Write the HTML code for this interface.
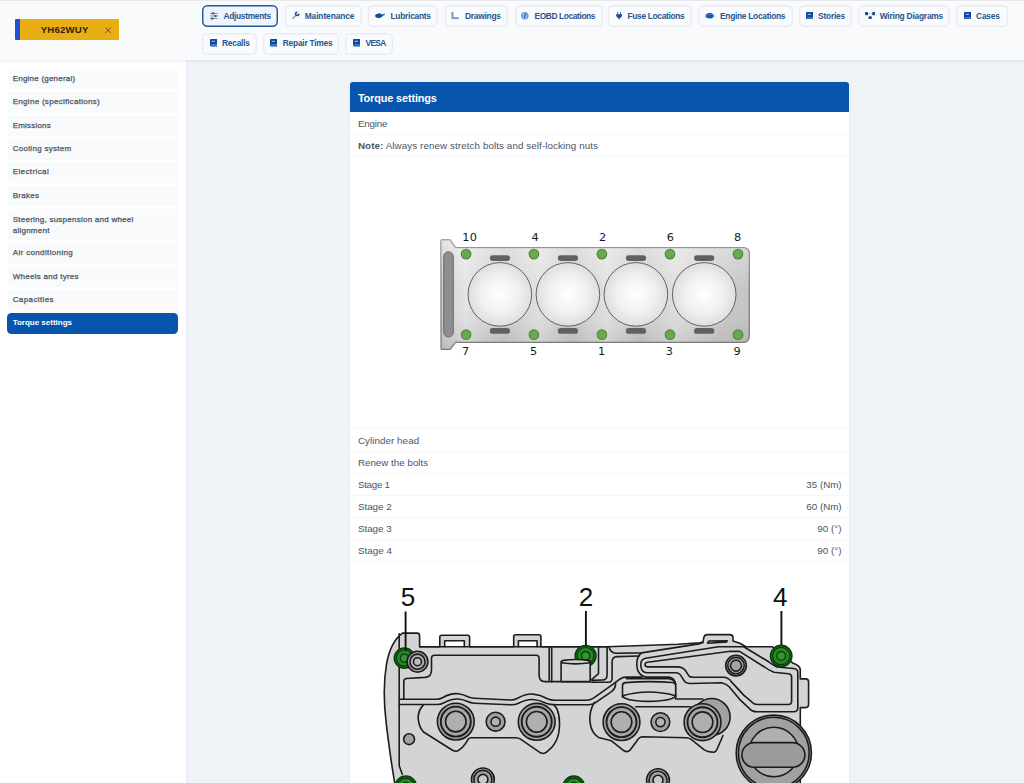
<!DOCTYPE html>
<html lang="en">
<head>
<meta charset="utf-8">
<title>Torque settings</title>
<style>
*{box-sizing:border-box;margin:0;padding:0}
html,body{width:1024px;height:783px;overflow:hidden}
body{background:#eff3f8;font-family:"Liberation Sans",sans-serif;color:#4b5563;position:relative;font-size:8.4px}
#top{position:absolute;left:0;top:0;width:1024px;height:60.400px;background:#f9fafc;box-shadow:inset 0 1px 0 #e6e8ec,0 .5px 2.500px rgba(40,50,80,.10);z-index:3}
#plate{position:absolute;left:14.9px;top:19.3px;width:104.1px;height:20.6px;background:linear-gradient(90deg,#2150d9 5.1px,#e9ae14 5.1px);border-radius:1px}
#plate b{position:absolute;left:25.8px;top:0;line-height:21.6px;font-size:9.6px;color:#2a2414;white-space:nowrap}
#plate svg{position:absolute;left:90.5px;top:7.5px}
.btn{position:absolute;height:22.1px;border-radius:5.5px;background:#f9fbfd;color:#27568f;font-weight:bold;font-size:8.4px;line-height:23px;white-space:nowrap;box-shadow:inset 0 0 0 1.4px #e8ecf2}
.btn span{position:absolute;top:0}
.btn svg{position:absolute;top:7.2px}
.btn svg.ic-book{top:7.1px}.btn.r2 svg.ic-book{top:6.9px}.btn svg.ic-oil{top:8.3px}.btn svg.ic-engine{top:8.400px}.btn svg.ic-plug{top:6.800px}.btn svg.ic-sliders{top:7px}.btn svg.ic-wrench{top:6.200px}
.btn.act{background:#f0f5fd;box-shadow:inset 0 0 0 1.5px #225b9b}
#side{position:absolute;left:0;top:60px;width:185.700px;height:724px;background:#fff;box-shadow:.5px 0 3px rgba(40,50,80,.07);z-index:2}
.it{position:absolute;left:8px;width:169.5px;height:20.5px;background:#f8fafc;border-radius:2px;padding-left:4.7px;line-height:20.5px;color:#4b5563;font-size:8px;white-space:nowrap;-webkit-text-stroke:.25px #4b5563}
.it.two{line-height:11px;padding-top:4.8px}
.it.sel{left:7px;width:171px;background:#0855ad;color:#fff;border-radius:4.5px;padding-left:5.7px;font-weight:bold;-webkit-text-stroke:0}
#card{position:absolute;left:349.5px;top:82px;width:499.5px;height:720px;background:#fff;border-radius:3px 3px 0 0;box-shadow:0 0 2px rgba(0,0,0,.08)}
#card h1{height:30.4px;background:#0855ad;color:#fff;font-size:10.9px;line-height:33.4px;padding-left:8.4px;border-radius:3px 3px 0 0;font-weight:bold;white-space:nowrap}
.row{position:absolute;left:0;width:500px;height:22.1px;border-bottom:1px solid #f4f6f9;line-height:22.4px;padding:0 8.4px;font-size:9.8px;color:#4b5563;white-space:nowrap}
.row em{position:absolute;right:7.9px;top:0;font-style:normal}
.btn.r2{line-height:21.4px}
.fig{position:absolute;left:0;width:500px;overflow:hidden}
.fig svg{position:absolute;left:0;top:0}
</style>
</head>
<body>
<div id="top">
<div id="plate"><b id="pl" style="letter-spacing:0.218px;">YH62WUY</b><svg viewBox="0 0 8 8" width="6.4" height="6.4"><path d="M.6.6 7.400 7.400M7.400.6.6 7.400" stroke="#5b4a17" stroke-width="1.100" fill="none"/></svg></div>
<div class="btn act" style="left:202.30px;top:4.90px;width:76.20px"><svg class="ic-sliders" style="left:7.80px" viewBox="0 0 16 16" width="7.800" height="7.800"><g stroke="#6f8bae" stroke-width="1.700" fill="none"><path d="M0 3h16M0 8h16M0 13.300h16"/></g><g fill="#48678f"><circle cx="6.500" cy="2.800" r="2.600"/><circle cx="11.100" cy="8" r="2.600"/><circle cx="4.700" cy="13.300" r="2.600"/></g></svg><span id="b0" style="left:21.10px;letter-spacing:-0.293px;">Adjustments</span></div>
<div class="btn" style="left:284.50px;top:4.90px;width:77.50px"><svg class="ic-wrench" style="left:7.50px" viewBox="0 0 16 16" width="8.200" height="8.200"><path d="M7.600 8.200 1.800 14.400" stroke="#8eaace" stroke-width="3.400" stroke-linecap="round" fill="none"/><path d="M10.480 2.310A3.200 3.200 0 1 0 13.390 5.220" stroke="#1d4f8c" stroke-width="3.100" fill="none"/></svg><span id="b1" style="left:20.20px;letter-spacing:-0.093px;">Maintenance</span></div>
<div class="btn" style="left:368.25px;top:4.90px;width:69.75px"><svg class="ic-oil" style="left:6.25px" viewBox="0 0 21 10" width="10.400" height="5"><path d="M.5 4.500C1.500 2.500 3.500 1.800 5 2.200 6.500.5 9.500 0 11.500 1.500L14 3 20.500 1 21 2 15 6.500C13.500 9 10 10 7 10 3.500 10 1 8.500.3 6.500z" fill="#0d4f9f"/></svg><span id="b2" style="left:22.25px;letter-spacing:-0.257px;">Lubricants</span></div>
<div class="btn" style="left:444.50px;top:4.90px;width:63.50px"><svg class="ic-ruler" style="left:6.75px" viewBox="0 0 16 16" width="7.600" height="7.600"><path d="M.5 0h5v10.500h10.500v5H.5z" fill="#a9c1e0"/><path d="M3 0v13h13" stroke="#5f8cc4" stroke-width="2.600" fill="none" opacity=".85"/></svg><span id="b3" style="left:20.50px;letter-spacing:-0.243px;">Drawings</span></div>
<div class="btn" style="left:514.50px;top:4.90px;width:88.00px"><svg class="ic-eobd" style="left:6.75px" viewBox="0 0 16 16" width="7.600" height="7.600"><circle cx="8" cy="8" r="8" fill="#6f9fd8"/><circle cx="8" cy="8" r="4.600" fill="#9dc0e9"/><path d="M9 3 11 3.600 8.800 10 6.500 13 6.300 9.500z" fill="#1b5cab"/></svg><span id="b4" style="left:20.00px;letter-spacing:-0.391px;">EOBD Locations</span></div>
<div class="btn" style="left:608.25px;top:4.90px;width:83.25px"><svg class="ic-plug" style="left:8.00px" viewBox="0 0 12 16" width="6.200" height="8.300"><path d="M2.600 0h1.600v4.500H7.800V0h1.600v4.500H12C12 8.500 10 11 7.200 12.300L6 16 4.800 12.300C2 11 0 8.500 0 4.500h2.600z" fill="#1d5196"/></svg><span id="b5" style="left:19.25px;letter-spacing:-0.322px;">Fuse Locations</span></div>
<div class="btn" style="left:697.50px;top:4.90px;width:95.00px"><svg class="ic-engine" style="left:7.50px" viewBox="0 0 18 10" width="9.800" height="5.600"><path d="M13 2.500h5v5.500h-5z" fill="#b4cbea"/><path d="M0 2h3.500v6H0z" fill="#8db0dd"/><path d="M4 .8C6 0 10-.2 12.500.6 14.600 1.400 15.500 3 15.500 5s-.9 3.600-3 4.400C10 10.200 6 10 4 9.200 2.800 8.500 2.200 6.800 2.200 5S2.800 1.500 4 .8z" fill="#1458a8"/><path d="M4.500 2Q8 1 12 2.200L11.500 4Q8 3.300 4.800 4z" fill="#4a86cf" opacity=".8"/></svg><span id="b6" style="left:22.50px;letter-spacing:-0.287px;">Engine Locations</span></div>
<div class="btn" style="left:798.50px;top:4.90px;width:53.50px"><svg class="ic-book" style="left:7.50px" viewBox="0 0 14 15" width="7" height="7.500"><path d="M2.400 0H14v15H2.400C.9 15 0 14 0 12.600V2.400C0 .9.9 0 2.400 0z" fill="#0a4a9c"/><rect x="3.400" y="3.600" width="6.600" height="2.600" rx=".6" fill="#7fb4ee"/><rect x="1.800" y="11.200" width="12.200" height="1.400" fill="#9cc6f3"/></svg><span id="b7" style="left:19.50px;letter-spacing:-0.193px;">Stories</span></div>
<div class="btn" style="left:858.00px;top:4.90px;width:92.00px"><svg class="ic-nodes" style="left:7.00px" viewBox="0 0 20 14" width="10.300" height="7.400"><path d="M3 3h14M3 3l7 8M17 3l-7 8" stroke="#9ab6d8" stroke-width="1" fill="none"/><rect x="0" y="0" width="6" height="6" rx="1.600" fill="#0e4690"/><rect x="14" y="0" width="6" height="6" rx="1.600" fill="#0e4690"/><rect x="7" y="8" width="6" height="6" rx="1.600" fill="#0e4690"/></svg><span id="b8" style="left:21.75px;letter-spacing:-0.213px;">Wiring Diagrams</span></div>
<div class="btn" style="left:956.00px;top:4.90px;width:51.50px"><svg class="ic-book" style="left:7.50px" viewBox="0 0 14 15" width="7" height="7.500"><path d="M2.400 0H14v15H2.400C.9 15 0 14 0 12.600V2.400C0 .9.9 0 2.400 0z" fill="#0a4a9c"/><rect x="3.400" y="3.600" width="6.600" height="2.600" rx=".6" fill="#7fb4ee"/><rect x="1.800" y="11.200" width="12.200" height="1.400" fill="#9cc6f3"/></svg><span id="b9" style="left:20.00px;letter-spacing:-0.172px;">Cases</span></div>
<div class="btn r2" style="left:202.30px;top:32.50px;width:54.30px"><svg class="ic-book" style="left:7.50px" viewBox="0 0 14 15" width="7" height="7.500"><path d="M2.400 0H14v15H2.400C.9 15 0 14 0 12.600V2.400C0 .9.9 0 2.400 0z" fill="#0a4a9c"/><rect x="3.400" y="3.600" width="6.600" height="2.600" rx=".6" fill="#7fb4ee"/><rect x="1.800" y="11.200" width="12.200" height="1.400" fill="#9cc6f3"/></svg><span id="b10" style="left:19.70px;letter-spacing:-0.224px;">Recalls</span></div>
<div class="btn r2" style="left:263.20px;top:32.50px;width:75.60px"><svg class="ic-book" style="left:7.20px" viewBox="0 0 14 15" width="7" height="7.500"><path d="M2.400 0H14v15H2.400C.9 15 0 14 0 12.600V2.400C0 .9.9 0 2.400 0z" fill="#0a4a9c"/><rect x="3.400" y="3.600" width="6.600" height="2.600" rx=".6" fill="#7fb4ee"/><rect x="1.800" y="11.200" width="12.200" height="1.400" fill="#9cc6f3"/></svg><span id="b11" style="left:19.60px;letter-spacing:-0.241px;">Repair Times</span></div>
<div class="btn r2" style="left:345.40px;top:32.50px;width:47.60px"><svg class="ic-book" style="left:7.60px" viewBox="0 0 14 15" width="7" height="7.500"><path d="M2.400 0H14v15H2.400C.9 15 0 14 0 12.600V2.400C0 .9.9 0 2.400 0z" fill="#0a4a9c"/><rect x="3.400" y="3.600" width="6.600" height="2.600" rx=".6" fill="#7fb4ee"/><rect x="1.800" y="11.200" width="12.200" height="1.400" fill="#9cc6f3"/></svg><span id="b12" style="left:20.10px;letter-spacing:-0.688px;">VESA</span></div>
</div>
<div id="side">
<div class="it" style="top:8.8px;height:20.5px"><span id="s0" style="letter-spacing:0.223px;">Engine (general)</span></div>
<div class="it" style="top:32.2px;height:20.5px"><span id="s1" style="letter-spacing:0.296px;">Engine (specifications)</span></div>
<div class="it" style="top:55.6px;height:20.5px"><span id="s2" style="letter-spacing:0.193px;">Emissions</span></div>
<div class="it" style="top:79.0px;height:20.5px"><span id="s3" style="letter-spacing:0.293px;">Cooling system</span></div>
<div class="it" style="top:102.4px;height:20.5px"><span id="s4" style="letter-spacing:0.394px;">Electrical</span></div>
<div class="it" style="top:125.8px;height:20.5px"><span id="s5" style="letter-spacing:0.279px;">Brakes</span></div>
<div class="it two" style="top:149.2px;height:31.0px"><span id="s6" style="letter-spacing:0.248px;">Steering, suspension and wheel</span><br><span style="letter-spacing:0.248px;">alignment</span></div>
<div class="it" style="top:183.2px;height:20.5px"><span id="s7" style="letter-spacing:0.360px;">Air conditioning</span></div>
<div class="it" style="top:206.6px;height:20.5px"><span id="s8" style="letter-spacing:0.272px;">Wheels and tyres</span></div>
<div class="it" style="top:230.0px;height:20.5px"><span id="s9" style="letter-spacing:0.393px;">Capacities</span></div>
<div class="it sel" style="top:253.4px;height:20.8px"><span id="s10" style="letter-spacing:-0.009px;">Torque settings</span></div>
</div>
<div id="card">
<h1><span id="h1" style="letter-spacing:-0.135px;">Torque settings</span></h1>
<div class="row" style="top:30.7px"><span id="r0" style="letter-spacing:-0.183px;">Engine</span></div>
<div class="row" style="top:52.7px"><span id="r1" style="letter-spacing:0.092px;"><b>Note:</b> Always renew stretch bolts and self-locking nuts</span></div>
<div class="row" style="top:347.5px"><span id="r2" style="letter-spacing:0.062px;">Cylinder head</span></div>
<div class="row" style="top:369.7px"><span id="r3" style="letter-spacing:0.002px;">Renew the bolts</span></div>
<div class="row" style="top:391.6px"><span id="r4" style="letter-spacing:-0.280px;">Stage 1</span><em id="v4" style="letter-spacing:-0.015px;">35 (Nm)</em></div>
<div class="row" style="top:413.6px"><span id="r5" style="letter-spacing:0.003px;">Stage 2</span><em id="v5" style="letter-spacing:-0.015px;">60 (Nm)</em></div>
<div class="row" style="top:436.0px"><span id="r6" style="letter-spacing:0.003px;">Stage 3</span><em id="v6" style="letter-spacing:0.067px;">90 (°)</em></div>
<div class="row" style="top:458.1px"><span id="r7" style="letter-spacing:0.036px;">Stage 4</span><em id="v7" style="letter-spacing:0.067px;">90 (°)</em></div>
<div class="fig" style="top:74.800px;height:272.700px;border-bottom:1px solid #f4f6f9">
<svg width="500" height="272" viewBox="349.5 156.8 500 272" font-family="'DejaVu Sans','Liberation Sans',sans-serif">
<defs>
<linearGradient id="gm" x1="0" y1="0" x2="1" y2="0">
<stop offset="0" stop-color="#cfcfcf"/><stop offset=".08" stop-color="#e4e4e4"/><stop offset=".2" stop-color="#cdcdcd"/><stop offset=".32" stop-color="#e2e2e2"/><stop offset=".42" stop-color="#cbcbcb"/><stop offset=".54" stop-color="#e2e2e2"/><stop offset=".64" stop-color="#cbcbcb"/><stop offset=".76" stop-color="#e0e0e0"/><stop offset=".9" stop-color="#cdcdcd"/><stop offset="1" stop-color="#c4c4c4"/>
</linearGradient>
<linearGradient id="gv" x1="0" y1="0" x2="0" y2="1">
<stop offset="0" stop-color="#fff" stop-opacity=".4"/><stop offset=".45" stop-color="#fff" stop-opacity="0"/><stop offset="1" stop-color="#000" stop-opacity=".1"/>
</linearGradient>
<radialGradient id="gc" cx=".5" cy=".5" r=".5">
<stop offset="0" stop-color="#ffffff"/><stop offset=".6" stop-color="#f0f0f0"/><stop offset="1" stop-color="#dedede"/>
</radialGradient>
</defs>
<path id="gb" d="M441.500 239.600H449.600L455 247.400H743A5.800 5.800 0 0 1 748.800 253.200V336.400A5.800 5.800 0 0 1 743 342.200H455L449.600 349.300H441.500A1 1 0 0 1 440.500 348.300V240.600A1 1 0 0 1 441.500 239.600Z" fill="url(#gm)" stroke="#7f7f7f" stroke-width="1.250"/>
<path d="M441.500 239.600H449.600L455 247.400H743A5.800 5.800 0 0 1 748.800 253.200V336.400A5.800 5.800 0 0 1 743 342.200H455L449.600 349.300H441.500A1 1 0 0 1 440.500 348.300V240.600A1 1 0 0 1 441.500 239.600Z" fill="url(#gv)"/>
<rect x="443.200" y="251.600" width="9.600" height="85.200" rx="4.800" fill="#8e8e8e" stroke="#6a6a6a" stroke-width="1"/>
<g fill="url(#gc)" stroke="#555" stroke-width=".9">
<circle cx="499.400" cy="294.200" r="31.800"/><circle cx="567.400" cy="294.200" r="31.800"/><circle cx="635.400" cy="294.200" r="31.800"/><circle cx="703.700" cy="294.200" r="31.800"/>
</g>
<g fill="#616161">
<rect x="489.300" y="255" width="20.300" height="5.800" rx="2.900"/><rect x="557.300" y="255" width="20.300" height="5.800" rx="2.900"/><rect x="625.300" y="255" width="20.300" height="5.800" rx="2.900"/><rect x="693.500" y="255" width="20.300" height="5.800" rx="2.900"/>
<rect x="489.300" y="327.800" width="20.300" height="5.800" rx="2.900"/><rect x="557.300" y="327.800" width="20.300" height="5.800" rx="2.900"/><rect x="625.300" y="327.800" width="20.300" height="5.800" rx="2.900"/><rect x="693.500" y="327.800" width="20.300" height="5.800" rx="2.900"/>
</g>
<g fill="#6aa950" stroke="#4c873a" stroke-width="1.100">
<circle cx="465.600" cy="253.900" r="4.800"/><circle cx="533.400" cy="253.900" r="4.800"/><circle cx="601.400" cy="253.900" r="4.800"/><circle cx="669.500" cy="253.900" r="4.800"/><circle cx="737.500" cy="253.900" r="4.800"/>
<circle cx="465.600" cy="334.500" r="4.800"/><circle cx="533.400" cy="334.500" r="4.800"/><circle cx="601.400" cy="334.500" r="4.800"/><circle cx="669.500" cy="334.500" r="4.800"/><circle cx="737.500" cy="334.500" r="4.800"/>
</g>
<g font-size="11.300" fill="#1a1a1a" text-anchor="middle">
<text x="469.2" y="240.8" letter-spacing=".35">10</text><text x="534.5" y="240.8">4</text><text x="602.1" y="240.8">2</text><text x="669.8" y="240.8">6</text><text x="737.2" y="240.8">8</text>
<text x="465.1" y="355.0">7</text><text x="533.1" y="355.0">5</text><text x="601.1" y="355.0">1</text><text x="668.8" y="355.0">3</text><text x="736.6" y="355.0">9</text>
</g>
</svg>
</div>
<div class="fig" style="top:479.8px;height:240px">
<svg width="500" height="240" viewBox="349.5 561.8 500 240" font-family="'Liberation Sans','DejaVu Sans',sans-serif">
<g fill="none" stroke="#1c1c1c" stroke-width="1.600" stroke-linejoin="round" stroke-linecap="round">
<!-- body silhouette -->
<path fill="#d3d4d6" d="M402 632.900H416.500Q419.100 632.900 419.100 635.500V646.600H439.300V637Q439.300 635 441.300 635H467.100Q469.100 635 469.100 637V646.600H513.200V636.600Q513.200 634.600 515.200 634.600H538.400Q540.400 634.600 540.400 636.600V646.600H607L677.500 644.100L699.400 642.500L702.500 641.700L703.300 637.500Q703.800 634.400 707.200 634.400H729.100Q732.500 634.400 732.500 637.800V640.900L740 643.300L745.300 646.600H772L792.100 662.700Q799.800 665 799.800 670V678.700H805.100Q808.100 678.700 808.100 681.700V704.400Q808.100 707.400 805.100 707.400H799.800V802H398Q392 775 385.800 724Q381.600 690 386 664Q390 641.500 402 632.900Z"/>
<!-- tab cutouts -->
<path fill="#fff" d="M444.200 646.600V640.600H463.800V646.600"/>
<path fill="#fff" d="M517.900 646.600V640.600H536.600V646.600"/>
<path d="M707.100 643L708.200 640.800L726.700 640.500L726.200 641.700Z"/>
<!-- left inner vertical -->
<path d="M398.700 633.500V765.600L401.800 774"/>
<path d="M419.100 646.600H607"/>
<g stroke="#0a3a0a"><circle cx="403.9" cy="657.9" r="10.1" fill="#1f721f" stroke-width="1.500"/><circle cx="403.9" cy="657.9" r="8.1" fill="#298529" stroke-width="1.200"/><circle cx="403.9" cy="657.9" r="4.0" fill="#359535" stroke-width="1.300"/></g>
<g stroke="#0a3a0a"><circle cx="585.1" cy="655.6" r="10.4" fill="#1f721f" stroke-width="1.500"/><circle cx="585.1" cy="655.6" r="8.3" fill="#298529" stroke-width="1.200"/><circle cx="585.1" cy="655.6" r="4.2" fill="#359535" stroke-width="1.300"/></g>
<!-- upper-left chamber panel -->
<path d="M403.300 699.100V681.300Q403.300 678.800 405.800 678.300L424.700 677.200Q431 676.500 431 670V658Q431 655 434 655H535.500Q538.600 655 538.600 658V675Q538.600 681.400 545 681.400H589.700"/>
<!-- thin wall -->
<path d="M548.700 646.600V680M551.200 646.600V681.400"/>
<!-- tower under bolt 2 -->
<path fill="#d3d4d6" d="M560.600 681.400V662.500Q560.600 660.400 563 660.200Q575 658.400 587.500 660.200Q589.700 660.400 589.700 662.500V681.400Z"/>
<path d="M560.800 662.500Q575 664.800 589.600 662.500"/>
<!-- notch wall right of bolt 2 -->
<path d="M598 646.600V673.400L590.900 679.600M606.600 646.600V675Q606.400 679.600 602 679.800L592 680.200M590.700 682H608Q611.600 682 611.600 678V661.300Q611.900 656.600 616.500 656.400L638.600 655.800"/>
<!-- second line below top edge -->
<path d="M608.500 646.800Q610 652.800 615.500 653L641 652.700L698.400 643.700L702.600 642.400"/>
<path d="M641 652.800Q636.200 656 636.300 664.200Q636.500 671 640 674.200Q642.500 676.900 646 676.900H668.500Q673.500 677.600 674.900 682.800V698.400"/>
<!-- rim double line -->
<path d="M398.700 699.100H436Q439.300 699.100 442 697.500Q450.700 692.600 458 693.600Q463 694.400 467.400 696.600Q470 697.800 474 698L510 699.800Q514 699.800 517 698Q525.600 693.400 532.500 693.900Q540 694.600 546 698Q550 700.100 557.500 700.100H586Q589.700 700.100 593 698L614.700 682.400Q618 679.500 621.300 677.800Q623 676.900 626 676.900H641.600"/>
<path d="M398.700 704.300H437Q440.500 704.300 443 702.800Q451 698.300 458 698.800Q463 699.300 467 701.300Q470 702.800 474 703L511 704.600Q515 704.600 518 703Q525.600 699 532.500 699.300Q539 699.800 545 702.800Q549 704.600 556 704.600H588Q592 704.600 595 702.500L611 691.500Q614.500 689 615 685V682"/>
<!-- valley around bosses 1,2 -->
<path d="M422.700 704.900Q416.500 712 417.900 720Q418.800 727.500 423 731.800L452 750Q455.500 751.800 458 750.200L462.200 746.900Q466 742.500 467.400 739.500Q468.400 737.600 471 737.600H515Q518 737.600 520 739L540 752.600Q543.500 754.200 546 752L551 747.500Q556.500 741.500 558.200 733Q560.500 718 556.400 708.500L553.500 704.600"/>
<!-- valley around bosses 3,4 -->
<path d="M593.900 702.200Q588.500 711 589.500 722Q590.800 733 598 737.200L611 740.600L623.500 750.600Q626.800 752.600 629.500 750L636.500 740.600Q638.500 736.800 642.500 736.600L686 737.600Q689 737.800 691 739.500L703.500 749.500Q706 751.400 709.500 751.700L713.500 752Q715.500 751.500 716.500 749L722.400 735.500"/>
<path d="M635.300 706.600H690M675.200 698.800H702.500"/>
<!-- small hole left -->
<circle cx="408.600" cy="739" r="5.400" fill="#a2a2a2"/>
<!-- boss 1 -->
<g fill="#a2a2a2"><circle cx="455.300" cy="721.400" r="18.4"/><circle cx="455.300" cy="721.400" r="15" fill="#a7a7a7" stroke-width="1.900"/><circle cx="455.300" cy="721.400" r="10.300" fill="#afafaf"/></g>
<g fill="#a2a2a2"><circle cx="536.200" cy="721.600" r="18.4"/><circle cx="536.200" cy="721.600" r="15" fill="#a7a7a7" stroke-width="1.900"/><circle cx="536.200" cy="721.600" r="10.300" fill="#afafaf"/></g>
<g fill="#a2a2a2"><circle cx="621" cy="721.900" r="18.4"/><circle cx="621" cy="721.900" r="15" fill="#a7a7a7" stroke-width="1.900"/><circle cx="621" cy="721.900" r="10.300" fill="#afafaf"/></g>
<circle cx="711.200" cy="716.700" r="18.400" fill="#a2a2a2"/>
<g fill="#a2a2a2"><circle cx="702" cy="722" r="18.4"/><circle cx="702" cy="722" r="15" fill="#a7a7a7" stroke-width="1.900"/><circle cx="702" cy="722" r="10.300" fill="#afafaf"/></g>
<!-- small circles between -->
<g fill="#a0a0a0"><circle cx="495.100" cy="721.500" r="9.400"/><circle cx="495.100" cy="721.500" r="4.600" fill="#b3b3b3"/>
<circle cx="659.900" cy="721.900" r="9.400"/><circle cx="659.900" cy="721.900" r="4.600" fill="#b3b3b3"/></g>
<!-- lower bosses -->
<g fill="#a3a3a3"><circle cx="482.400" cy="779.200" r="11.400"/><circle cx="482.400" cy="779.200" r="9"/><circle cx="482.400" cy="779.200" r="5" fill="#c8c8c8"/>
<circle cx="657.500" cy="780" r="11.400"/><circle cx="657.500" cy="780" r="9"/><circle cx="657.500" cy="780" r="5" fill="#c8c8c8"/></g>
<!-- washer near bolt 5 and upper-right boss -->
<g fill="#aaaaaa"><circle cx="417" cy="661.500" r="10.400"/><circle cx="417" cy="661.500" r="7.600" fill="#b3b3b3"/><circle cx="417" cy="661.500" r="4" fill="#c2bcc2"/>
<circle cx="735.500" cy="665.400" r="10.300"/><circle cx="735.500" cy="665.400" r="8.200" fill="#b0b0b0"/><circle cx="735.500" cy="665.400" r="5.500" fill="#a4a4a4"/></g>
<!-- hairpin loops H2 (outer) and H3 (inner) -->
<path d="M640.300 664.200Q640.300 659.200 645 658.100L717.900 646.600H743.200L768.200 661.600Q772 664.500 776.500 666.800L793 668.300Q797.300 668.600 797.300 672.500V707.600Q797.300 711.600 793.300 711.600H756Q751.600 711.600 749 708.500L739.100 699.100L728.700 686.600Q726 683.800 721 682.600L690 683.300Q685 683.300 683.200 680L680.800 675.900Q679 672.600 675 672.500H646Q640.300 672 640.300 664.200Z"/>
<path d="M644.500 664.200Q644.500 662.600 647 662.100L730 651L739.100 651.200L764 666.800Q768 670 773.400 672L788 673.500Q791.100 673.800 791.100 677V701.300Q791.100 704.300 788 704.300H757Q753.600 704.300 751.500 702L743.200 694.900L730.700 681.400Q728 677.500 723.800 677.100H692.500Q689.500 676.900 688.600 675.900L684.700 670.100Q682 666.900 676.900 666.700H647Q644.500 666.200 644.500 664.200Z"/>
<!-- pocket with lens -->
<path fill="#d3d4d6" d="M622 697V685.500Q622 682.600 625 682.400Q648 680.600 672 682.300Q675.200 682.600 675.200 685.500V697"/>
<path d="M626 678.400H668.100Q674 679 675.200 684"/>
<path fill="#d3d4d6" d="M622 695.500Q648 688 675.200 695.500Q674 698.800 662 700.300Q648 702 634 700.300Q623 698.800 622 695.500Z"/>
<!-- oil filler cap -->
<circle cx="773.300" cy="752.500" r="37.600" fill="#a1a1a1"/>
<circle cx="773.300" cy="752.500" r="35.400" fill="#a1a1a1"/>
<circle cx="773.300" cy="751.800" r="24.800" fill="#afafaf"/>
<rect x="741.400" y="742.400" width="63" height="24.600" rx="12.300" fill="#9b9b9b"/>
</g>
<g stroke="#111" stroke-width="1.900" fill="none"><path d="M405.100 611.200V650M585.400 610.800V646M780.900 610.800V646"/></g>
<g stroke="#0a3a0a"><circle cx="780.7" cy="655.8" r="10.7" fill="#1f721f" stroke-width="1.500"/><circle cx="780.7" cy="655.8" r="8.6" fill="#298529" stroke-width="1.200"/><circle cx="780.7" cy="655.8" r="4.3" fill="#359535" stroke-width="1.300"/></g>
<g stroke="#0a3a0a"><circle cx="405.3" cy="786.6" r="10.7" fill="#1f721f" stroke-width="1.500"/><circle cx="405.3" cy="786.6" r="8.6" fill="#298529" stroke-width="1.200"/><circle cx="405.3" cy="786.6" r="4.3" fill="#359535" stroke-width="1.300"/></g>
<g stroke="#0a3a0a"><circle cx="573.3" cy="786.6" r="10.7" fill="#1f721f" stroke-width="1.500"/><circle cx="573.3" cy="786.6" r="8.6" fill="#298529" stroke-width="1.200"/><circle cx="573.3" cy="786.6" r="4.3" fill="#359535" stroke-width="1.300"/></g>
<g font-size="26" fill="#111" text-anchor="middle"><text x="407.400" y="606.300">5</text><text x="585.500" y="606.300">2</text><text x="779.800" y="606.300">4</text></g>
</svg>
</div>
</div>
</body>
</html>
